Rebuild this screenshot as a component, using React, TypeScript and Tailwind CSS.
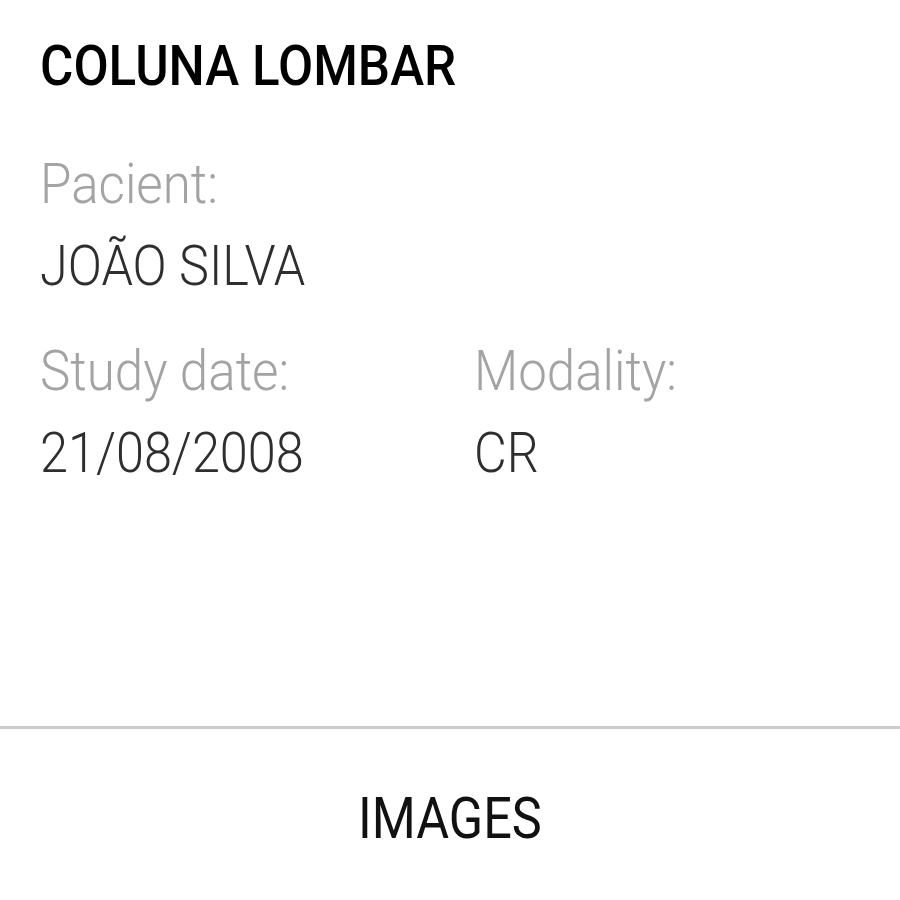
import React from 'react';

type Field = { label: string; value: string };

const Info: React.FC<Field & { className?: string }> = ({ label, value, className }) => (
  <div className={className}>
    <div className="text-[56px] leading-[82px] font-light text-[#a3a3a3] scale-x-[0.912] origin-left">{label}</div>
    <div className="text-[56px] leading-[82px] font-light text-[#2e2e2e] scale-x-[0.9] origin-left">{value}</div>
  </div>
);

const App: React.FC = () => {
  return (
    <div className="w-[900px] h-[900px] bg-white flex flex-col font-['Roboto',sans-serif] overflow-hidden">
      {/* Study card */}
      <div className="h-[729px] pl-10 pt-[36px] border-b-[3px] border-[#cccccc]">
        <h1 className="text-[56px] leading-[60px] font-medium text-black scale-x-[0.913] origin-left">COLUNA LOMBAR</h1>
        <Info label="Pacient:" value="JOÃO SILVA" className="mt-[47px]" />
        <div className="flex mt-[23px]">
          <Info label="Study date:" value="21/08/2008" className="w-[434px]" />
          <Info label="Modality:" value="CR" />
        </div>
      </div>

      {/* Action */}
      <button className="flex-1 flex items-center justify-center pt-2 text-[57px] font-normal text-[#111]">
        <span className="scale-x-[0.885]">IMAGES</span>
      </button>
    </div>
  );
};

export default App;
